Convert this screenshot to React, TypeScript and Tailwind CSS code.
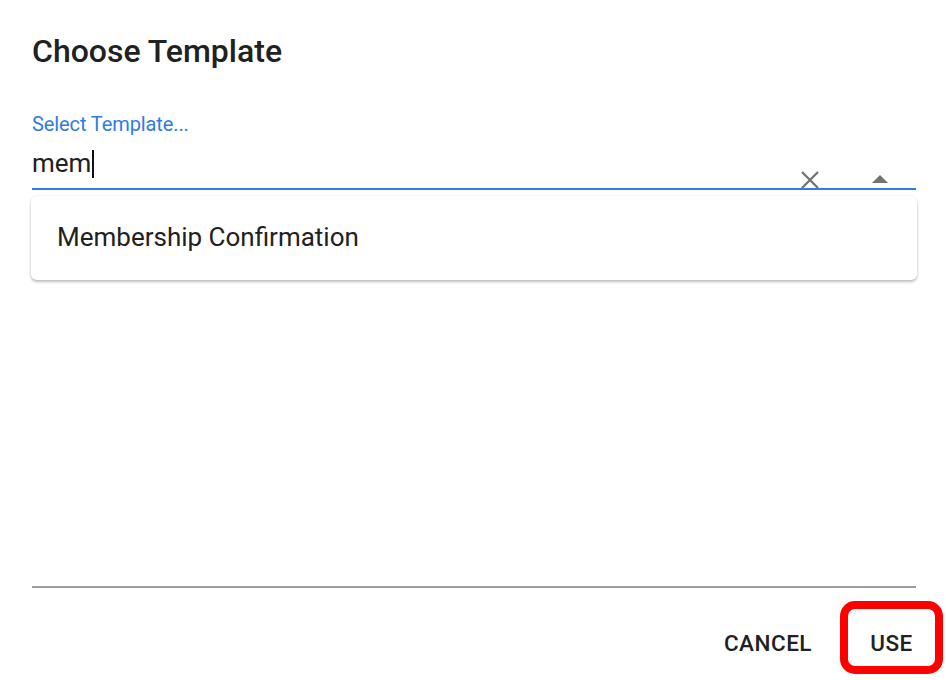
import React from "react";

const font = { fontFamily: "Roboto, 'Noto Sans', Arial, sans-serif" };

const CloseIcon = () => (
  <svg width="20" height="18" viewBox="0 0 20 18" className="text-[#737373]">
    <path d="M2 1 L18 17 M18 1 L2 17" stroke="currentColor" strokeWidth="2.3" fill="none" />
  </svg>
);

const ArrowUp = () => (
  <svg width="16" height="8" viewBox="0 0 16 8" className="text-[#737373]">
    <path d="M0 8 L8 0 L16 8 Z" fill="currentColor" />
  </svg>
);

export default function App() {
  return (
    <div style={font} className="w-[946px] h-[680px] bg-white flex flex-col pl-8 pr-[30px] text-[#212121]">
      <h1 className="mt-[31px] text-[32px] leading-[40px] font-medium">Choose Template</h1>

      {/* autocomplete field */}
      <div className="mt-[41px] flex flex-col">
        <label className="text-[20px] leading-[24px] text-[#2e7ce4] tracking-[-0.1px]">Select Template...</label>
        <div className="relative mt-[10px] h-[44px] border-b-2 border-[#2e7ce4] flex">
          <div className="flex items-start pt-[1px]">
            <span className="text-[26px] leading-[32px]">mem</span>
            <span className="w-[2px] h-[28px] bg-[#111] mt-[3px] ml-[1px]" />
          </div>
          <div className="absolute left-[768px] top-[25px]">
            <CloseIcon />
          </div>
          <div className="absolute left-[840px] top-[29px]">
            <ArrowUp />
          </div>
        </div>
        <div className="mt-[6px] -mx-px h-[84px] rounded-[6px] bg-white shadow-[0_2px_3px_rgba(0,0,0,0.25),0_0_2px_rgba(0,0,0,0.08)] px-[26px] pt-[26px]">
          <span className="block text-[26px] leading-[30px]">Membership Confirmation</span>
        </div>
      </div>

      <div className="flex-1" />

      <div className="h-[2px] bg-[#9e9e9e]" />
      <div className="h-[92px] flex items-start justify-end -mr-[27px]">
        <button className="mt-[42px] text-[22.5px] leading-[26px] font-medium tracking-[0.5px]">CANCEL</button>
        <button className="ml-[28px] mt-[13px] w-[103px] h-[73px] rounded-[15px] border-[8px] border-[#ff0000] text-[22.5px] leading-[26px] font-medium tracking-[0.5px] flex justify-center pt-[21px]">
          USE
        </button>
      </div>
    </div>
  );
}
